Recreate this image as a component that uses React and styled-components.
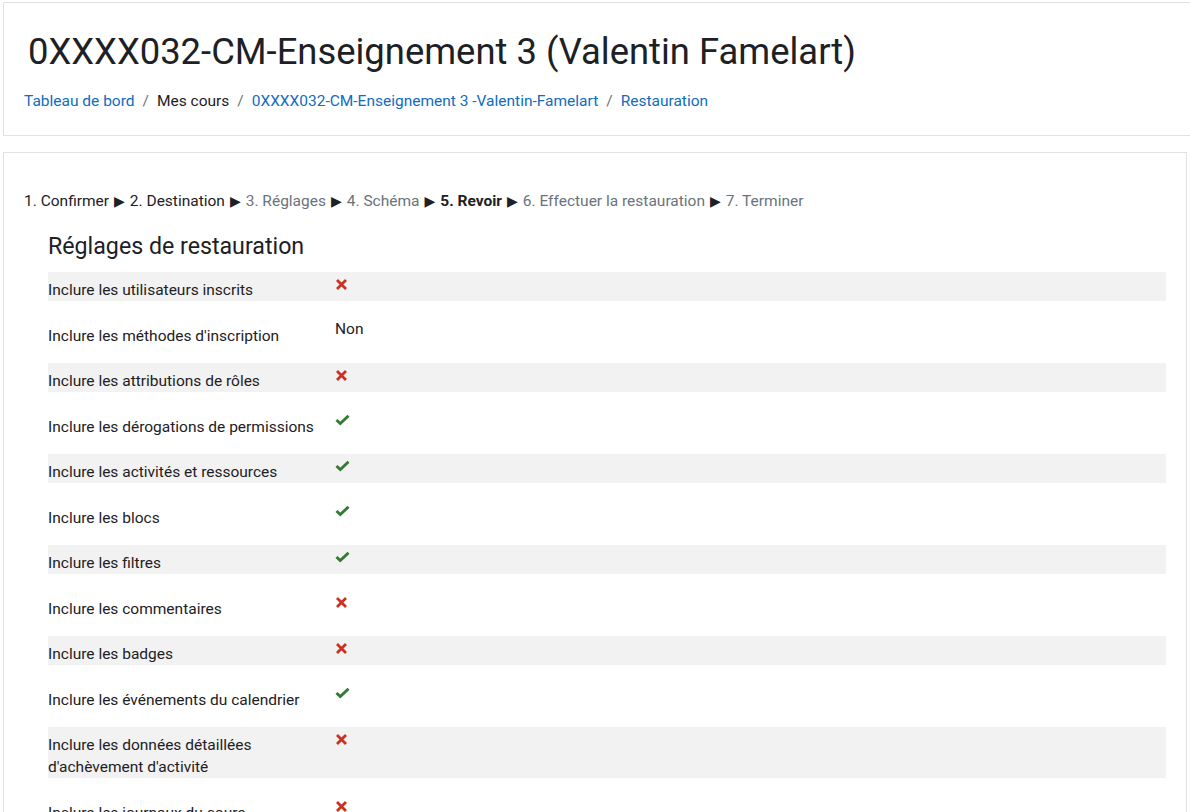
import React from 'react';
import styled, { createGlobalStyle } from 'styled-components';

const GlobalStyle = createGlobalStyle`
    html, body {
        margin: 0;
        padding: 0;
        background: #fff;
        overflow: hidden;
    }
    body {
        font-family: Roboto, "Liberation Sans", sans-serif;
        font-size: 15.5px;
        color: #1d2125;
    }
`;

const Page = styled.div`
    padding: 2px 0 0 3px;
    width: 1184px;
`;

const HeaderCard = styled.header`
    border: 1px solid #dee2e6;
    margin-right: -40px;
    padding: 25px 20px 20px;
    height: 134px;
    box-sizing: border-box;
`;

const Title = styled.h1`
    margin: 0 0 14px 4px;
    font-size: 36.4px;
    font-weight: 400;
    line-height: 48px;
    color: #1d2125;
`;

const Crumbs = styled.nav`
    display: flex;
    align-items: center;
    line-height: 22px;
`;

const Crumb = styled.a`
    color: ${p => (p.$link ? '#0f6cbf' : '#1d2125')};
    text-decoration: none;
`;

const Sep = styled.span`
    color: #6a737b;
    padding: 0 8px;
`;

const MainCard = styled.section`
    margin-top: 16px;
    border: 1px solid #dee2e6;
    padding: 37px 20px 20px;
    height: 700px;
    box-sizing: border-box;
`;

const Steps = styled.div`
    line-height: 22px;
    margin-bottom: 20px;
`;

const Step = styled.span`
    color: ${p => (p.$state === 'todo' ? '#6a737b' : '#1d2125')};
    font-weight: ${p => (p.$state === 'current' ? 700 : 400)};
`;

const Arrow = styled.span`
    color: #1d2125;
    font-family: "DejaVu Sans", sans-serif;
    font-size: 14px;
    padding: 0 5px;
`;

const Section = styled.div`
    padding-left: 24px;
`;

const Heading = styled.h3`
    margin: 0 0 12px;
    font-size: 23.2px;
    font-weight: 400;
    line-height: 28px;
`;

const Setting = styled.div`
    display: grid;
    grid-template-columns: 287px 1fr;
    margin-bottom: 16.5px;
    background: ${p => (p.$striped ? '#f2f2f2' : 'transparent')};
`;

const Label = styled.div`
    padding: 7px 15px 0 0;
    line-height: 22px;
`;

const Value = styled.div`
    line-height: 22px;
    padding-top: ${p => (p.$icon ? '5.5px' : '0')};

    svg {
        display: block;
    }
`;

const Cross = () => (
    <svg width="13" height="13" viewBox="0 0 13 13">
        <path d="M2 2 L11 11 M11 2 L2 11" stroke="#ca3120" strokeWidth="2.8" strokeLinecap="butt" />
    </svg>
);

const Check = () => (
    <svg width="15" height="12" viewBox="0 0 15 12">
        <path d="M1.5 6 L5.3 9.6 L13.5 1.8" stroke="#357a32" strokeWidth="2.9" fill="none" />
    </svg>
);

const steps = [
    ['1. Confirmer', 'done'],
    ['2. Destination', 'done'],
    ['3. Réglages', 'todo'],
    ['4. Schéma', 'todo'],
    ['5. Revoir', 'current'],
    ['6. Effectuer la restauration', 'todo'],
    ['7. Terminer', 'todo'],
];

const settings = [
    ['Inclure les utilisateurs inscrits', 'no'],
    ["Inclure les méthodes d'inscription", 'Non'],
    ['Inclure les attributions de rôles', 'no'],
    ['Inclure les dérogations de permissions', 'yes'],
    ['Inclure les activités et ressources', 'yes'],
    ['Inclure les blocs', 'yes'],
    ['Inclure les filtres', 'yes'],
    ['Inclure les commentaires', 'no'],
    ['Inclure les badges', 'no'],
    ['Inclure les événements du calendrier', 'yes'],
    ["Inclure les données détaillées d'achèvement d'activité", 'no'],
    ['Inclure les journaux du cours', 'no'],
    ["Inclure l'historique des notes", 'no'],
];

export default function App() {
    return (
        <>
            <GlobalStyle />
            <Page>
                <HeaderCard>
                    <Title>0XXXX032-CM-Enseignement 3 (Valentin Famelart)</Title>
                    <Crumbs>
                        <Crumb $link href="#">Tableau de bord</Crumb>
                        <Sep>/</Sep>
                        <Crumb>Mes cours</Crumb>
                        <Sep>/</Sep>
                        <Crumb $link href="#">0XXXX032-CM-Enseignement 3 -Valentin-Famelart</Crumb>
                        <Sep>/</Sep>
                        <Crumb $link href="#">Restauration</Crumb>
                    </Crumbs>
                </HeaderCard>
                <MainCard>
                    <Steps>
                        {steps.map(([text, state], i) => (
                            <React.Fragment key={text}>
                                {i > 0 && <Arrow>▶</Arrow>}
                                <Step $state={state}>{text}</Step>
                            </React.Fragment>
                        ))}
                    </Steps>
                    <Section>
                        <Heading>Réglages de restauration</Heading>
                        {settings.map(([label, value], i) => (
                            <Setting key={label} $striped={i % 2 === 0}>
                                <Label>{label}</Label>
                                <Value $icon={value === 'yes' || value === 'no'}>
                                    {value === 'yes' ? <Check /> : value === 'no' ? <Cross /> : value}
                                </Value>
                            </Setting>
                        ))}
                    </Section>
                </MainCard>
            </Page>
        </>
    );
}
